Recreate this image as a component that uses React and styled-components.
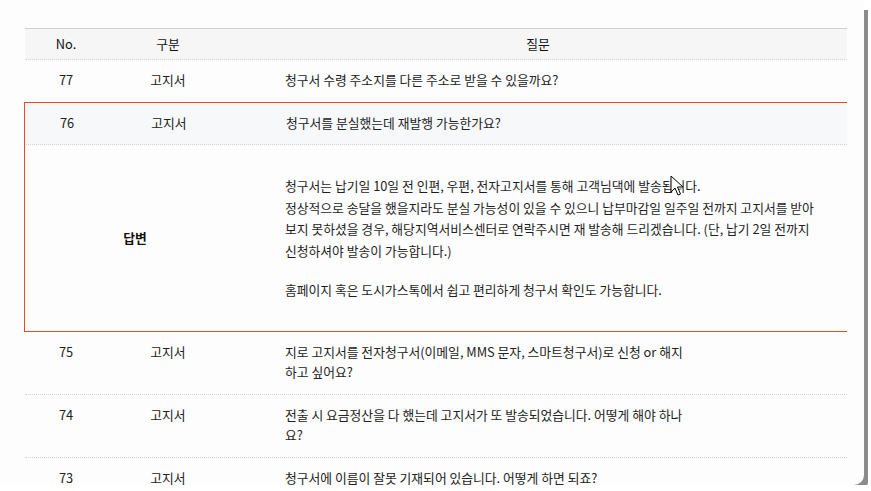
import React from 'react';
import styled, { createGlobalStyle } from 'styled-components';

const GlobalStyle = createGlobalStyle`
  html, body {
    margin: 0;
    padding: 0;
    background: #fff;
  }
  body {
    font-family: 'Noto Sans CJK KR', 'Noto Sans', sans-serif;
    color: #222;
  }
`;

const Frame = styled.div`
  position: relative;
  width: 864px;
  height: 485px;
  box-sizing: border-box;
  background: #fdfdfd;
  border-radius: 0 0 10px 0;
  box-shadow: 7px 7px 0 -3px #8c8c8c;
  overflow: hidden;
  padding: 28px 17px 0 25px;
`;

const Table = styled.div`
  width: 822px;
  font-size: 12.8px;
`;

const Row = styled.div`
  display: grid;
  grid-template-columns: 82px 122px 1fr;
  background: ${(p) => (p.$active ? '#f7f8fa' : 'transparent')};
  border-bottom: ${(p) => (p.$last ? 'none' : '1px dotted #d4d4d4')};
  line-height: 20.5px;
`;

const Head = styled(Row)`
  background: #f6f6f7;
  border-top: 1px solid #cfcfd4;
  height: 30px;
  align-items: center;
  color: #111;
`;

const Cell = styled.div`
  padding: 10px 0 11px;
  text-align: ${(p) => (p.$left ? 'left' : 'center')};
  padding-left: ${(p) => (p.$left ? '56px' : '0')};
`;

const HeadCell = styled.div`
  text-align: center;
`;

const Opened = styled.div`
  border: 1px solid #f04a1a;
  border-right: none;
  margin-left: -1px;

  ${Row} {
    margin-left: 1px;
  }
`;

const AnswerRow = styled.div`
  display: grid;
  grid-template-columns: 220px 1fr;
  background: #fdfdfd;
`;

const AnswerLabel = styled.div`
  display: flex;
  align-items: center;
  justify-content: center;
  font-weight: 700;
  color: #111;
`;

const AnswerBody = styled.div`
  display: flex;
  flex-direction: column;
  gap: 17px;
  padding: 30px 0 30px 40px;
  line-height: 21.7px;
  color: #1e1e1e;
  white-space: nowrap;
`;

const Cursor = styled.svg`
  position: absolute;
  left: 670px;
  top: 175px;
`;

const rows = [
  { no: 77, type: '고지서', q: ['청구서 수령 주소지를 다른 주소로 받을 수 있을까요?'] },
];

const rest = [
  { no: 75, type: '고지서', q: ['지로 고지서를 전자청구서(이메일, MMS 문자, 스마트청구서)로 신청 or 해지', '하고 싶어요?'] },
  { no: 74, type: '고지서', q: ['전출 시 요금정산을 다 했는데 고지서가 또 발송되었습니다. 어떻게 해야 하나', '요?'] },
  { no: 73, type: '고지서', q: ['청구서에 이름이 잘못 기재되어 있습니다. 어떻게 하면 되죠?'] },
];

function QRow({ item, active, last }) {
  return (
    <Row $active={active} $last={last}>
      <Cell>{item.no}</Cell>
      <Cell>{item.type}</Cell>
      <Cell $left>
        {item.q.map((line, i) => (
          <div key={i}>{line}</div>
        ))}
      </Cell>
    </Row>
  );
}

export default function App() {
  return (
    <>
      <GlobalStyle />
      <Frame>
        <Table>
          <Head>
            <HeadCell>No.</HeadCell>
            <HeadCell>구분</HeadCell>
            <HeadCell>질문</HeadCell>
          </Head>
          {rows.map((r) => (
            <QRow key={r.no} item={r} last />
          ))}
          <Opened>
            <QRow
              item={{ no: 76, type: '고지서', q: ['청구서를 분실했는데 재발행 가능한가요?'] }}
              active
            />
            <AnswerRow>
              <AnswerLabel>답변</AnswerLabel>
              <AnswerBody>
                <div>
                  청구서는 납기일 10일 전 인편, 우편, 전자고지서를 통해 고객님댁에 발송됩니다.
                  <br />
                  정상적으로 송달을 했을지라도 분실 가능성이 있을 수 있으니 납부마감일 일주일 전까지 고지서를 받아
                  <br />
                  보지 못하셨을 경우, 해당지역서비스센터로 연락주시면 재 발송해 드리겠습니다. (단, 납기 2일 전까지
                  <br />
                  신청하셔야 발송이 가능합니다.)
                </div>
                <div>홈페이지 혹은 도시가스톡에서 쉽고 편리하게 청구서 확인도 가능합니다.</div>
              </AnswerBody>
            </AnswerRow>
          </Opened>
          {rest.map((r) => (
            <QRow key={r.no} item={r} />
          ))}
        </Table>
        <Cursor width="14" height="22" viewBox="0 0 14 22">
          <path
            d="M1 1 L1 17 L5 13 L8 20 L10.5 19 L7.5 12 L13 12 Z"
            fill="#fff"
            stroke="#000"
            strokeWidth="1"
            strokeLinejoin="round"
          />
        </Cursor>
      </Frame>
    </>
  );
}
